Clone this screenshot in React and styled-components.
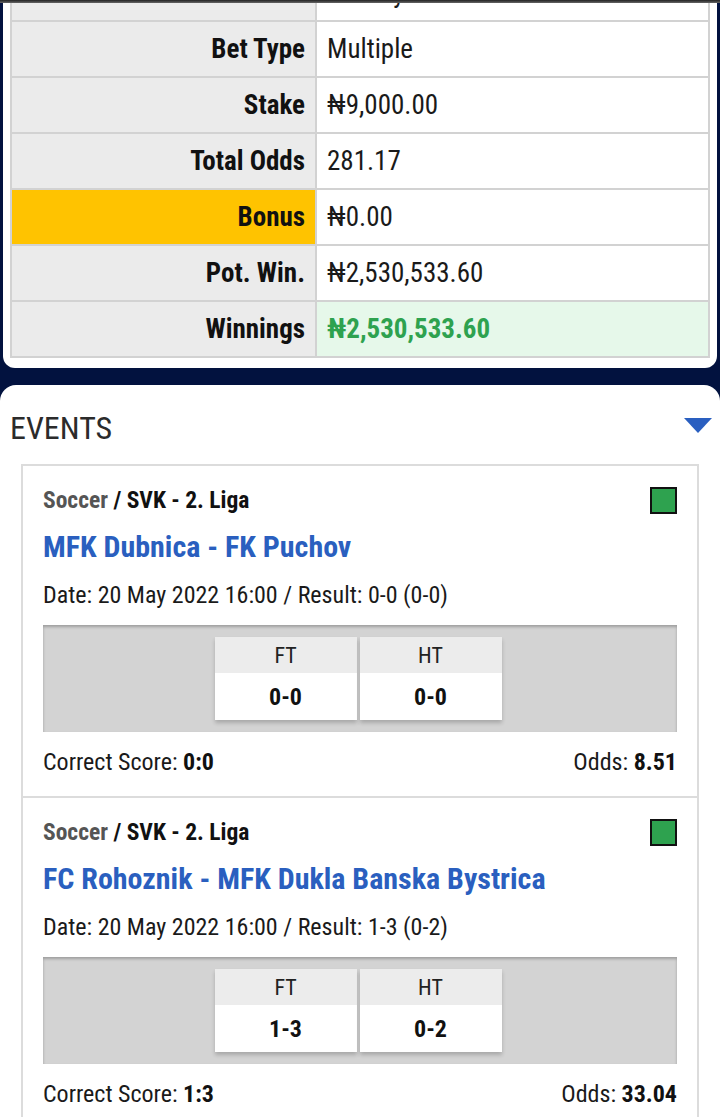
import styled, { createGlobalStyle } from "styled-components";

const GlobalStyle = createGlobalStyle`
  body {
    margin: 0;
    background: #02123f;
    font-family: "Roboto Condensed", "Liberation Sans Narrow", "Roboto", sans-serif;
    color: #111;
  }
`;

const rows = [
  { label: "Bet Type", value: "Multiple" },
  { label: "Stake", value: "₦9,000.00" },
  { label: "Total Odds", value: "281.17" },
  { label: "Bonus", value: "₦0.00", bonus: true },
  { label: "Pot. Win.", value: "₦2,530,533.60" },
  { label: "Winnings", value: "₦2,530,533.60", win: true },
];

const events = [
  {
    league: "SVK - 2. Liga",
    teams: "MFK Dubnica - FK Puchov",
    date: "20 May 2022 16:00",
    result: "0-0 (0-0)",
    ft: "0-0",
    ht: "0-0",
    pick: "0:0",
    odds: "8.51",
  },
  {
    league: "SVK - 2. Liga",
    teams: "FC Rohoznik - MFK Dukla Banska Bystrica",
    date: "20 May 2022 16:00",
    result: "1-3 (0-2)",
    ft: "1-3",
    ht: "0-2",
    pick: "1:3",
    odds: "33.04",
  },
];

function App() {
  return (
    <Page>
      <GlobalStyle />
      <TopShade />
      <SummaryCard>
        <Table>
          <Row>
            <Label />
            <Value $cut>Sunday</Value>
          </Row>
          {rows.map((r) => (
            <Row key={r.label}>
              <Label $bonus={r.bonus}>{r.label}</Label>
              <Value $win={r.win}>{r.value}</Value>
            </Row>
          ))}
        </Table>
      </SummaryCard>

      <EventsCard>
        <EventsHead>
          <EventsTitle>EVENTS</EventsTitle>
          <Caret />
        </EventsHead>
        <EventList>
          {events.map((e) => (
            <Event key={e.teams}>
              <EventTop>
                <League>
                  <Sport>Soccer</Sport> / {e.league}
                </League>
                <Status />
              </EventTop>
              <Teams>{e.teams}</Teams>
              <Info>
                Date: {e.date} / Result: {e.result}
              </Info>
              <ScoreBox>
                <ScoreTable>
                  <ScoreCol>
                    <ScoreHead>FT</ScoreHead>
                    <ScoreVal>{e.ft}</ScoreVal>
                  </ScoreCol>
                  <ScoreCol>
                    <ScoreHead>HT</ScoreHead>
                    <ScoreVal>{e.ht}</ScoreVal>
                  </ScoreCol>
                </ScoreTable>
              </ScoreBox>
              <Footer>
                <span>
                  Correct Score: <b>{e.pick}</b>
                </span>
                <span>
                  Odds: <b>{e.odds}</b>
                </span>
              </Footer>
            </Event>
          ))}
        </EventList>
      </EventsCard>
    </Page>
  );
}

export default App;

const Page = styled.div`
  width: 720px;
  height: 1117px;
  overflow: hidden;
  position: relative;
  background: #02123f;
`;

const TopShade = styled.div`
  position: absolute;
  top: 0;
  left: 0;
  right: 0;
  height: 3px;
  background: linear-gradient(#222, #666);
  z-index: 2;
`;

const SummaryCard = styled.div`
  background: #fff;
  margin: 0 3px;
  padding: 0 7px 10px;
  border-radius: 0 0 12px 12px;
  margin-top: -34px;
`;

const Table = styled.div`
  border: 2px solid #d2d2d2;
  border-top: none;
`;

const Row = styled.div`
  display: grid;
  grid-template-columns: 305px 1fr;
  border-top: 2px solid #d2d2d2;
  &:first-child {
    border-top: none;
  }
`;

const Label = styled.div`
  height: 54px;
  background: ${(p) => (p.$bonus ? "#ffc300" : "#ebebeb")};
  border-right: 2px solid #d2d2d2;
  display: flex;
  align-items: center;
  justify-content: flex-end;
  padding-right: 10px;
  font-weight: 700;
  font-size: 27px;
  color: #111;
`;

const Value = styled.div`
  height: 54px;
  background: ${(p) => (p.$win ? "#e6f8ea" : "#fff")};
  display: flex;
  align-items: center;
  padding-left: 10px;
  font-size: 27px;
  font-weight: ${(p) => (p.$win ? 700 : 400)};
  color: ${(p) => (p.$win ? "#2ea24f" : "#1a1a1a")};
`;

const EventsCard = styled.div`
  background: #fff;
  margin-top: 17px;
  border-radius: 16px 16px 0 0;
  padding: 22px 0 0;
  min-height: 800px;
`;

const EventsHead = styled.div`
  display: flex;
  justify-content: space-between;
  align-items: center;
  padding: 0 8px 0 10px;
  height: 42px;
`;

const EventsTitle = styled.h2`
  margin: 0;
  font-size: 32px;
  font-weight: 400;
  color: #2b2b2b;
`;

const Caret = styled.div`
  width: 0;
  height: 0;
  margin-top: -6px;
  border-left: 14px solid transparent;
  border-right: 14px solid transparent;
  border-top: 15px solid #2a5fc0;
`;

const EventList = styled.div`
  margin: 15px 21px 0;
  border: 2px solid #dcdcdc;
  border-bottom: none;
`;

const Event = styled.div`
  padding: 20px 20px 20px;
  border-top: 2px solid #dcdcdc;
  &:first-child {
    border-top: none;
  }
`;

const EventTop = styled.div`
  display: flex;
  justify-content: space-between;
  align-items: center;
  height: 28px;
`;

const League = styled.div`
  font-size: 23.5px;
  line-height: 28px;
  font-weight: 700;
  color: #111;
`;

const Sport = styled.span`
  color: #555;
`;

const Status = styled.div`
  width: 23px;
  height: 23px;
  border: 2px solid #111;
  background: #2ea24f;
`;

const Teams = styled.div`
  margin-top: 16px;
  font-size: 30px;
  line-height: 34px;
  font-weight: 700;
  color: #2a5fbf;
`;

const Info = styled.div`
  margin-top: 17px;
  font-size: 24px;
  line-height: 28px;
  color: #1a1a1a;
`;

const ScoreBox = styled.div`
  margin-top: 16px;
  background: #d3d3d3;
  height: 107px;
  box-shadow: inset 0 2px 3px rgba(0, 0, 0, 0.25);
  display: flex;
  justify-content: center;
  align-items: flex-start;
  padding-top: 12px;
  box-sizing: border-box;
`;

const ScoreTable = styled.div`
  display: flex;
  gap: 3px;
  margin-left: -4px;
`;

const ScoreCol = styled.div`
  width: 142px;
  box-shadow: 0 3px 4px rgba(0, 0, 0, 0.2);
`;

const ScoreHead = styled.div`
  height: 36px;
  background: #ececec;
  display: flex;
  align-items: center;
  justify-content: center;
  font-size: 22px;
  color: #222;
`;

const ScoreVal = styled.div`
  height: 47px;
  background: #fff;
  display: flex;
  align-items: center;
  justify-content: center;
  font-size: 24px;
  font-weight: 700;
  color: #111;
`;

const Footer = styled.div`
  margin-top: 16px;
  display: flex;
  justify-content: space-between;
  font-size: 24px;
  line-height: 28px;
  color: #1a1a1a;
  b {
    font-weight: 700;
    color: #111;
  }
`;
